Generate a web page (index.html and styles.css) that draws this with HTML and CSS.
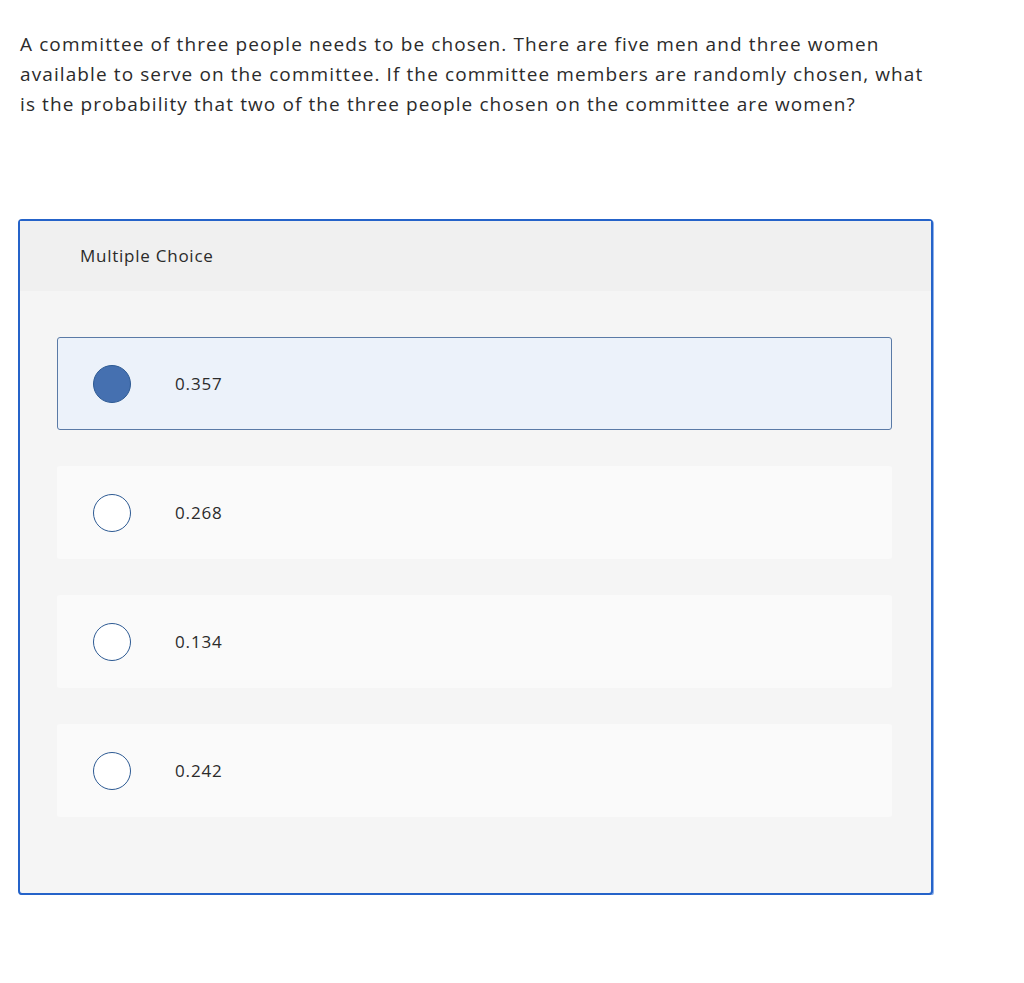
FILE: index.html
```html
<!DOCTYPE html>
<html>
<head>
<meta charset="utf-8">
<link rel="stylesheet" href="styles.css">
</head>
<body>
<div class="page">
  <p class="question">A committee of three people needs to be chosen. There are five men and three women available to serve on the committee. If the committee members are randomly chosen, what is the probability that two of the three people chosen on the committee are women?</p>
  <div class="card">
    <div class="card-head">Multiple Choice</div>
    <div class="options">
      <div class="option selected"><span class="radio"></span><span class="label">0.357</span></div>
      <div class="option"><span class="radio"></span><span class="label">0.268</span></div>
      <div class="option"><span class="radio"></span><span class="label">0.134</span></div>
      <div class="option"><span class="radio"></span><span class="label">0.242</span></div>
    </div>
  </div>
</div>
</body>
</html>
```
FILE: styles.css
```css
html, body {
  margin: 0;
  padding: 0;
  background: #ffffff;
}
body {
  font-family: "Open Sans", "Lato", sans-serif;
  color: #2b2b2b;
}
.page {
  padding: 29px 0 0 20px;
}
.question {
  margin: 0;
  width: 905px;
  font-size: 19px;
  letter-spacing: 1.1px;
  line-height: 30px;
}
.card {
  margin-top: 100px;
  margin-left: -2px;
  width: 911px;
  border: 2px solid #2563c9;
  border-radius: 4px;
  background: #f5f5f5;
  padding-bottom: 76px;
  box-shadow: 1px 1px 0 #8fb1ea;
}
.card-head {
  background: #f0f0f0;
  height: 70px;
  box-sizing: border-box;
  padding: 24px 0 0 60px;
  font-size: 17px;
  letter-spacing: 0.75px;
  line-height: 22px;
}
.options {
  display: flex;
  flex-direction: column;
  gap: 36px;
  padding: 46px 39px 0 37px;
}
.option {
  height: 93px;
  box-sizing: border-box;
  display: flex;
  align-items: center;
  background: #fafafa;
  border-radius: 3px;
  border: 1px solid transparent;
  padding-left: 35px;
}
.option.selected {
  background: #ecf2fa;
  border-color: #5a7aa6;
}
.radio {
  width: 38px;
  height: 38px;
  box-sizing: border-box;
  border-radius: 50%;
  border: 1.5px solid #2d5a93;
  background: #ffffff;
}
.option.selected .radio {
  background: #4570b0;
}
.label {
  margin-left: 44px;
  font-size: 17px;
  letter-spacing: 0.85px;
}
```
